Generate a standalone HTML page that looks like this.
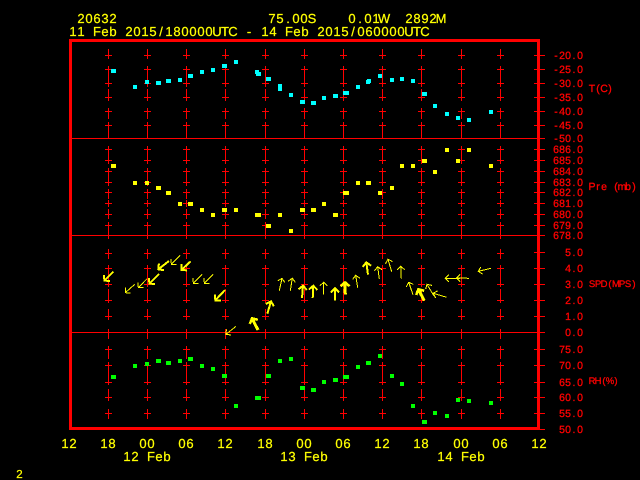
<!DOCTYPE html>
<html>
<head>
<meta charset="utf-8">
<style>
html,body{margin:0;padding:0;background:#000;width:640px;height:480px;overflow:hidden}
svg{display:block}
text{font-family:"Liberation Sans",sans-serif;text-anchor:middle;text-rendering:geometricPrecision}
.y{fill:#ff0;stroke:#ff0;stroke-width:.25px;font-size:13px}
.r{fill:#f00;stroke:#f00;stroke-width:.3px;font-size:10.5px}
</style>
</head>
<body>
<svg width="640" height="480" viewBox="0 0 640 480" xmlns="http://www.w3.org/2000/svg" shape-rendering="crispEdges">
<defs>
<path id="c" fill="none" stroke="#f00" d="M.5 49V59M.5 66V87M.5 89V101M.5 108V119M.5 122V138M-3 55.5H4M-3 69.5H4M-3 83.5H4M-3 97.5H4M-3 111.5H4M-3 125.5H4
M.5 146V164M.5 168V186M.5 189V199M.5 200V207M.5 209V219M.5 222V239M-3 149.5H4M-3 160.5H4M-3 171.5H4M-3 182.5H4M-3 192.5H4M-3 203.5H4M-3 214.5H4M-3 225.5H4
M.5 249V259M.5 265V287M.5 289V303M.5 309V320M.5 329V339M-3 253.5H4M-3 268.5H4M-3 284.5H4M-3 300.5H4M-3 316.5H4
M.5 346V359M.5 362V385M.5 389V401M.5 409V419M-3 349.5H4M-3 365.5H4M-3 382.5H4M-3 397.5H4M-3 413.5H4"/>
<marker id="m1" markerUnits="userSpaceOnUse" markerWidth="20" markerHeight="20" refX="0" refY="0" orient="auto" overflow="visible"><path d="M-3.5 -3.7L0 0L-3.5 3.7" fill="none" stroke="#ff0" stroke-width="1"/></marker>
<marker id="m2" markerUnits="userSpaceOnUse" markerWidth="20" markerHeight="20" refX="0" refY="0" orient="auto" overflow="visible"><path d="M-4 -4.2L0 0L-4 4.2" fill="none" stroke="#ff0" stroke-width="2"/></marker>
<marker id="m3" markerUnits="userSpaceOnUse" markerWidth="20" markerHeight="20" refX="0" refY="0" orient="auto" overflow="visible"><path d="M-4 -4.5L0 0L-4 4.5" fill="none" stroke="#ff0" stroke-width="2.5"/></marker>
</defs>

<g>
<use href="#c" x="108"/><use href="#c" x="147"/><use href="#c" x="186"/><use href="#c" x="225"/><use href="#c" x="265"/><use href="#c" x="304"/><use href="#c" x="343"/><use href="#c" x="382"/><use href="#c" x="421"/><use href="#c" x="461"/><use href="#c" x="500"/>
<path fill="none" stroke="#f00" d="M72 138.5H545M72 235.5H545M72 332.5H545M537 429.5H545
M534 55.5H545M534 69.5H545M534 83.5H545M534 97.5H545M534 111.5H545M534 125.5H545
M534 149.5H545M534 160.5H545M534 171.5H545M534 182.5H545M534 192.5H545M534 203.5H545M534 214.5H545M534 225.5H545
M534 252.5H545M534 268.5H545M534 284.5H545M534 300.5H545M534 316.5H545
M534 349.5H545M534 365.5H545M534 382.5H545M534 397.5H545M534 413.5H545"/>
<rect x="70.5" y="40.5" width="468" height="388" fill="none" stroke="#f00" stroke-width="3"/>

<path fill="#0ff" d="M111 69h5v4h-5zM133 85h4v4h-4zM145 80h4v4h-4zM156 81h5v4h-5zM166 79h5v4h-5zM178 78h4v4h-4zM188 74h5v4h-5zM200 70h4v4h-4zM211 68h4v4h-4zM222 64h5v4h-5zM234 60h4v4h-4zM255 70h4v4h-4zM256 72h5v4h-5zM266 77h5v4h-5zM278 84h4v4h-4zM278 87h4v4h-4zM289 93h4v4h-4zM300 100h5v4h-5zM311 101h5v4h-5zM322 96h4v4h-4zM333 94h5v4h-5zM343 91h6v4h-6zM356 85h4v4h-4zM366 80h4v4h-4zM367 79h4v4h-4zM378 74h4v4h-4zM390 78h4v4h-4zM400 77h4v4h-4zM411 79h4v4h-4zM422 92h5v4h-5zM433 104h4v4h-4zM445 112h4v4h-4zM456 116h4v4h-4zM467 118h4v4h-4zM489 110h4v4h-4z"/>
<path fill="#ff0" d="M111 164h5v4h-5zM133 181h4v4h-4zM145 181h4v4h-4zM156 186h5v4h-5zM166 191h5v4h-5zM178 202h4v4h-4zM188 202h5v4h-5zM200 208h4v4h-4zM211 213h4v4h-4zM222 208h5v4h-5zM234 208h4v4h-4zM255 213h6v4h-6zM266 224h5v4h-5zM278 213h4v4h-4zM289 229h4v4h-4zM300 208h5v4h-5zM311 208h5v4h-5zM322 202h4v4h-4zM333 213h5v4h-5zM343 191h6v4h-6zM356 181h4v4h-4zM366 181h5v4h-5zM378 191h4v4h-4zM390 186h4v4h-4zM400 164h4v4h-4zM411 164h4v4h-4zM422 159h5v4h-5zM433 170h4v4h-4zM445 148h4v4h-4zM456 159h4v4h-4zM467 148h4v4h-4zM489 164h4v4h-4z"/>
<path fill="#0f0" d="M111 375h5v4h-5zM133 364h4v4h-4zM145 362h4v4h-4zM156 359h5v4h-5zM166 361h5v4h-5zM178 359h4v4h-4zM188 357h5v4h-5zM200 364h4v4h-4zM211 367h4v4h-4zM222 374h5v4h-5zM234 404h4v4h-4zM255 396h6v4h-6zM266 374h5v4h-5zM278 359h4v4h-4zM289 357h4v4h-4zM300 386h5v4h-5zM311 388h5v4h-5zM322 380h4v4h-4zM333 378h5v4h-5zM343 375h6v4h-6zM356 365h4v4h-4zM366 361h5v4h-5zM378 354h4v4h-4zM390 374h4v4h-4zM400 382h4v4h-4zM411 404h4v4h-4zM422 420h5v4h-5zM433 411h4v4h-4zM445 414h4v4h-4zM456 398h4v4h-4zM467 399h4v4h-4zM489 401h4v4h-4z"/>

<g fill="none" stroke="#ff0" stroke-width="1" marker-end="url(#m1)">
<path d="M134.7 284.3L125.3 292.7"/>
<path d="M146.7 279L138.3 287.7"/>
<path d="M180 255.3L171.3 264.3"/>
<path d="M202 274.3L193.3 283.3"/>
<path d="M213 274.3L204.3 283.3"/>
<path d="M236 326.3L226 334.3"/>
<path d="M279.3 290.7L282 278.3"/>
<path d="M290.3 290.7L292.3 278.3"/>
<path d="M323.3 294.7L323.7 282.3"/>
<path d="M357.7 287.7L355.7 275.3"/>
<path d="M379.3 279L377.7 266.7"/>
<path d="M391.7 271.7L388 259.3"/>
<path d="M401.3 278.7L400.7 266.3"/>
<path d="M413 294.7L408.7 282.3"/>
<path d="M434 296L427 284.3"/>
<path d="M446.7 297.3L433.3 293.3"/>
<path d="M460 278.3L445.3 278.3"/>
<path d="M469 278.3L456.7 278"/>
<path d="M491 268.3L478.3 271.3"/>
</g>
<g fill="none" stroke="#ff0" stroke-width="2" stroke-linejoin="bevel" marker-end="url(#m2)">
<path d="M113.3 271.7L104.3 280.7"/>
<path d="M159 274L149.3 283.7"/>
<path d="M169 261L158.3 269.3"/>
<path d="M190.7 261.3L181.3 270"/>
<path d="M225 290L215.3 300.3"/>
<path d="M267.3 313.7L271 301.3"/>
<path d="M302 298L303 285.7"/>
<path d="M312.7 298L313.3 285.7"/>
<path d="M335 300.7L335 288.3"/>
<path d="M368 274.7L366.3 262.3"/>
</g>
<g fill="none" stroke="#ff0" stroke-width="3" stroke-linejoin="bevel" marker-end="url(#m3)">
<path d="M258 330L252 318.3"/>
<path d="M345.3 294.7L345 282.3"/>
<path d="M424.3 300.7L418.3 289.3"/>
</g>
</g>

<text class="y" y="23" x="81 89 97 105 113">20632</text>
<text class="y" y="23" x="272 280 288 296 304 312">75.00S</text>
<text class="y" y="23" x="352 360 368 376 384">0.01W</text>
<text class="y" y="23" x="409 417 425 433 441">2892M</text>
<text class="y" y="36" x="73 81 89 97 105 113 121 129 137 145 153 161 169 177 185 193 201 209 217 225 233 241 249 257 265 273 281 289 297 305 313 321 329 337 345 353 361 369 377 385 393 401 409 417 425">11 Feb 2015/180000UTC - 14 Feb 2015/060000UTC</text>

<text class="y" y="448" x="65 73">12</text>
<text class="y" y="448" x="104 112">18</text>
<text class="y" y="448" x="143 151">00</text>
<text class="y" y="448" x="182 190">06</text>
<text class="y" y="448" x="221 229">12</text>
<text class="y" y="448" x="261 269">18</text>
<text class="y" y="448" x="300 308">00</text>
<text class="y" y="448" x="339 347">06</text>
<text class="y" y="448" x="378 386">12</text>
<text class="y" y="448" x="417 425">18</text>
<text class="y" y="448" x="457 465">00</text>
<text class="y" y="448" x="496 504">06</text>
<text class="y" y="448" x="535 543">12</text>
<text class="y" y="461" x="127 135 143 151 159 167">12 Feb</text>
<text class="y" y="461" x="284 292 300 308 316 324">13 Feb</text>
<text class="y" y="461" x="441 449 457 465 473 481">14 Feb</text>
<text class="y" y="478" x="19.5" style="font-size:11.5px">2</text>

<text class="r" y="59" x="556 562 568 574 580">-20.0</text>
<text class="r" y="73" x="556 562 568 574 580">-25.0</text>
<text class="r" y="87" x="556 562 568 574 580">-30.0</text>
<text class="r" y="101" x="556 562 568 574 580">-35.0</text>
<text class="r" y="115" x="556 562 568 574 580">-40.0</text>
<text class="r" y="129" x="556 562 568 574 580">-45.0</text>
<text class="r" y="142" x="556 562 568 574 580">-50.0</text>
<text class="r" y="153" x="556 562 568 574 580">686.0</text>
<text class="r" y="164" x="556 562 568 574 580">685.0</text>
<text class="r" y="175" x="556 562 568 574 580">684.0</text>
<text class="r" y="186" x="556 562 568 574 580">683.0</text>
<text class="r" y="196" x="556 562 568 574 580">682.0</text>
<text class="r" y="207" x="556 562 568 574 580">681.0</text>
<text class="r" y="218" x="556 562 568 574 580">680.0</text>
<text class="r" y="229" x="556 562 568 574 580">679.0</text>
<text class="r" y="239" x="556 562 568 574 580">678.0</text>
<text class="r" y="256" x="568 574 580">5.0</text>
<text class="r" y="272" x="568 574 580">4.0</text>
<text class="r" y="288" x="568 574 580">3.0</text>
<text class="r" y="304" x="568 574 580">2.0</text>
<text class="r" y="320" x="568 574 580">1.0</text>
<text class="r" y="336" x="568 574 580">0.0</text>
<text class="r" y="353" x="562 568 574 580">75.0</text>
<text class="r" y="369" x="562 568 574 580">70.0</text>
<text class="r" y="386" x="562 568 574 580">65.0</text>
<text class="r" y="401" x="562 568 574 580">60.0</text>
<text class="r" y="417" x="562 568 574 580">55.0</text>
<text class="r" y="433" x="562 568 574 580">50.0</text>

<text class="r" y="92" x="592 598 604 610">T(C)</text>
<text class="r" y="190" x="592 598 604 610 616 622 628 634">Pre (mb)</text>
<text class="r" y="287" x="592 598 604 610 616 622 628 634" style="font-size:9.5px">SPD(MPS)</text>
<text class="r" y="384" x="592 598 604 610 616" style="font-size:9.5px">RH(%)</text>
</svg>
</body>
</html>
